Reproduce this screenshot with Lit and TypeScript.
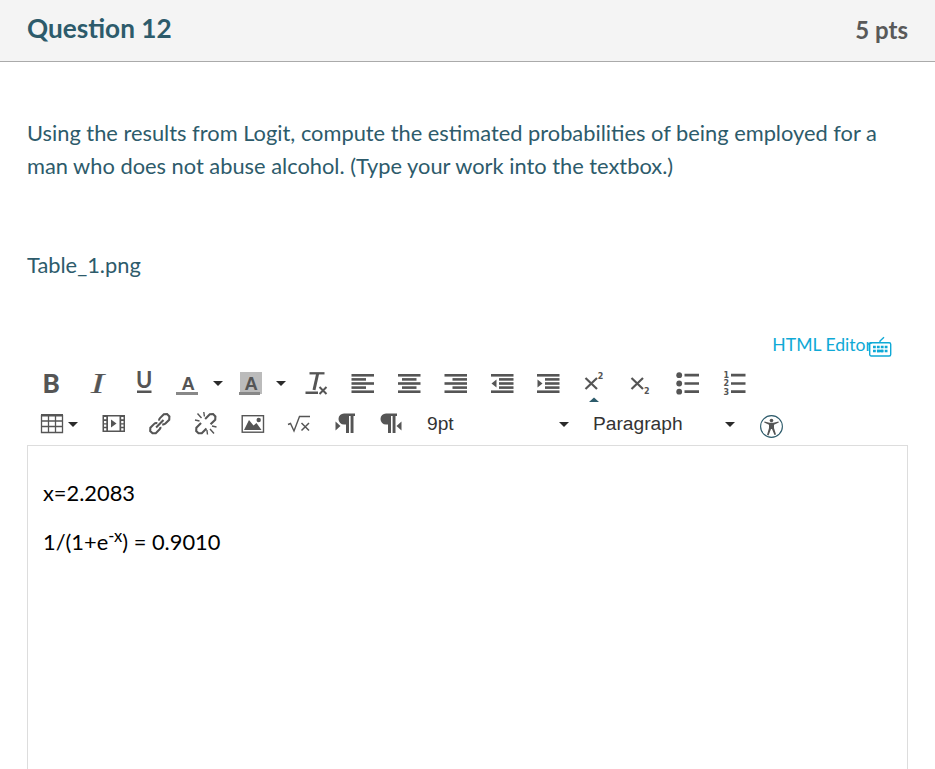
import { LitElement, html, css, svg } from "lit";
import { customElement } from "lit/decorators.js";

const bars = (rows: number[][]) =>
  rows.map(([x, w], i) => svg`<rect x=${x} y=${2 + i * 4.1} width=${w} height="2.6"/>`);

const link = svg`<g transform="translate(-.2 -.3) rotate(-45 12 12) translate(12 12) scale(1.16) translate(-12 -12)" fill="none" stroke="currentColor" stroke-width="1.8">
  <path d="M10.500 14.300Q9.800 15.300 8.500 15.300H3.800L1.700 13.400V10.600L3.800 8.700H8.500Q10 8.700 10.800 10.200"/>
  <path d="M13.500 9.700Q14.200 8.700 15.500 8.700H20.200L22.300 10.600V13.400L20.200 15.300H15.500Q14 15.300 13.200 13.800"/><path d="M7.500 12h9"/></g>`;

const unlink = svg`<g transform="translate(-.2 -.3) rotate(-45 12 12) translate(12 12) scale(1.16) translate(-12 -12)" fill="none" stroke="currentColor" stroke-width="1.800">
  <path d="M9.500 15.300H3.800L1.700 13.400V10.600L3.800 8.700H9.500"/><path d="M14.500 8.700H20.200L22.300 10.600V13.400L20.200 15.300H14.500"/></g>
  <path d="M1 8l4.500 1M3.500 1.500l4 4.500M9.800 0l.6 4.500M22.500 15l-4.500-1M20 21.500l-4-4.500M13.500 22.500l-.6-4.500" fill="none" stroke="currentColor" stroke-width="1.400"/>`;

const pilcrow = (dx: number) =>
  svg`<path transform=${`translate(${dx} 0)`} d="M6 1.500H17V4H15.500V21H12.600V4H11V21H8V12.500H6A5.500 5.500 0 0 1 6 1.500Z"/>`;

const top = [
  ["Bold", svg`<text x="2.600" y="21" class="b">B</text>`],
  ["Italic", svg`<text transform="translate(4.800 21) scale(1.400 1)" class="i">I</text>`],
  ["Underline", svg`<text x="4" y="16" class="u">U</text><rect x="5" y="18.500" width="14.500" height="2.500"/>`],
  ["Text color", svg`<text x="5.500" y="18" class="a">A</text><rect x="0" y="20" width="22" height="3" fill="#888"/>`, true],
  ["Background color", svg`<rect x="1" y="0" width="22" height="22" fill="#bbb"/><rect x="0" y="20" width="21" height="3" fill="#888"/><text x="5.500" y="18" class="a">A</text>`, true],
  ["Clear formatting", svg`<path d="M5.500 1.300H20.500" fill="none" stroke="currentColor" stroke-width="2.300"/><path d="M13.700 1.500L10 18" fill="none" stroke="currentColor" stroke-width="3"/><rect x="1.500" y="19.500" width="12.500" height="2.500"/><path d="M15.500 15l7 7M22.500 15l-7 7" stroke="currentColor" stroke-width="2"/>`],
  ["Align left", bars([[0.5, 22.5], [0.5, 14.5], [0.5, 22.5], [0.5, 14.5], [0.5, 22.5]])],
  ["Align center", bars([[1, 22.5], [5, 14.5], [1, 22.5], [5, 14.5], [1, 22.5]])],
  ["Align right", bars([[0.5, 22.5], [8.5, 14.5], [0.5, 22.5], [8.5, 14.5], [0.5, 22.5]])],
  ["Outdent", svg`${bars([[1, 22.5], [9, 14.5], [9, 14.5], [9, 14.5], [1, 22.5]])}<path d="M6.500 7.500v8L1.500 11.500z"/>`],
  ["Indent", svg`${bars([[0, 22.5], [8, 14.5], [8, 14.5], [8, 14.5], [0, 22.5]])}<path d="M.5 7.500v8l5-4z"/>`],
  ["Superscript", svg`<path d="M2.500 6L14 17M14 6L2.500 17" stroke="currentColor" stroke-width="2.200"/><text x="14.800" y="7" class="n">2</text><path d="M6 30h10l-5-4.500z" fill="#2d5b6b"/>`],
  ["Subscript", svg`<path d="M2.500 6L14 17M14 6L2.500 17" stroke="currentColor" stroke-width="2.200"/><text x="15" y="22" class="n">2</text>`],
  ["Bullet list", svg`<circle cx="3.200" cy="3.200" r="2.900"/><circle cx="3.200" cy="11.500" r="2.900"/><circle cx="3.200" cy="19.700" r="2.900"/><path d="M8.500 3.200h14.500M8.500 11.500h14.500M8.500 19.700h14.500" stroke="currentColor" stroke-width="2.700"/>`],
  ["Numbered list", svg`<text x="0.500" y="6" class="n">1</text><text x="0.500" y="14.300" class="n">2</text><text x="0.500" y="22.500" class="n">3</text><path d="M8 3.200h14.500M8 11.500h14.500M8 19.700h14.500" stroke="currentColor" stroke-width="2.700"/>`],
] as [string, unknown, boolean?][];

const bottom = [
  ["Table", svg`<path d="M1.500 3v17.500h21V3M8.500 3v17.500M15.500 3v17.500M1 9h22M1 14.500h22" fill="none" stroke="currentColor" stroke-width="1.300"/><rect x="1" y="2" width="22" height="2.500"/>`, true],
  ["Media", svg`<path fill-rule="evenodd" d="M.5 3h22.500v17H.5zM6 4.500v14h11.500v-14zM2 5v2.300h2.300V5zM2 9v2.300h2.300V9zM2 12.500v2.300h2.300v-2.300zM2 16.300v2.300h2.300v-2.300zM19.200 5v2.300h2.300V5zM19.200 9v2.300h2.300V9zM19.200 12.500v2.300h2.300v-2.300zM19.200 16.300v2.300h2.300v-2.300z"/><path d="M9 7.500v8l5.500-4z"/>`],
  ["Link", link],
  ["Unlink", unlink],
  ["Image", svg`<rect x="1.200" y="3.700" width="21.300" height="16.500" fill="none" stroke="currentColor" stroke-width="1.400"/><path d="M3 18l5-10 4.500 5.500 3-2.500 5 7z"/><circle cx="17.700" cy="8" r="2.200"/>`],
  ["Equation", svg`<path d="M1 12.500l2.500-1 3.500 7.500L12.500 4.500H23" fill="none" stroke="currentColor" stroke-width="1.400"/><path d="M14.500 11l7.500 7.500M22 11l-7.500 7.500" stroke="currentColor" stroke-width="1.500"/>`],
  ["Left to right", svg`${pilcrow(4)}<path d="M1.500 9.500v9l5-4.500z"/>`],
  ["Right to left", svg`${pilcrow(0)}<path d="M21.500 9.500v9l-5-4.500z"/>`],
] as [string, unknown, boolean?][];

@customElement("app-root")
export class AppRoot extends LitElement {
  static styles = css`
    :host { display: flex; flex-direction: column; height: 769px; overflow: hidden; background: #fff; font-family: Lato, sans-serif; color: #2d5b6b; }
    .head { box-sizing: border-box; height: 62px; flex: none; display: flex; justify-content: space-between; padding: 0 27px; background: #f4f4f4; border-bottom: 1px solid #aaa; font-weight: 700; font-size: 26.2px; line-height: 57px; }
    .pts { color: #595959; font-size: 24px; line-height: 60px; }
    .body { flex: 1; display: flex; flex-direction: column; padding: 54px 27px 0; font-size: 21.83px; line-height: 33px; }
    p { margin: 0; white-space: nowrap; }
    .file { margin-top: 66px; }
    .switch { display: flex; justify-content: flex-end; margin-top: 51px; padding-right: 15px; height: 26px; color: #0fa9d6; font-size: 17.6px; line-height: 26px; }
    .keys { width: 24px; height: 26px; margin-left: -3px; }
    .row { display: grid; height: 24px; margin-left: 13px; color: #555; line-height: 24px; }
    .top { margin-top: 14px; grid-template-columns: 46px 46px 44px 63px 65px 47px 46px 47px 46px 47px 46px 46px 47px 47px 24px; }
    .bottom { margin-top: 16px; grid-template-columns: 62px 46px 46px 47px 46px 47px 46px 47px 166px 167px 30px; }
    .tool { display: flex; align-items: center; }
    svg { display: block; flex: none; overflow: visible; fill: currentColor; }
    .caret { width: 0; border: 5px solid transparent; border-top-color: #2b2b2b; border-bottom: 0; }
    .top .caret { margin-left: 13.4px; margin-bottom: 2px; }
    .bottom .caret { margin-left: 4px; }
    .select { display: flex; justify-content: space-between; align-items: center; color: #333; font: 19.2px/24px "Liberation Sans", sans-serif; }
    .size { padding-right: 24px; }
    .para { padding-right: 25px; }
    .b { font: 900 26px Lato, sans-serif; }
    .i { font: italic 400 29px "Liberation Serif", serif; stroke: currentColor; stroke-width: 0.2px; }
    .u { font: 700 22px Lato, sans-serif; }
    .a { font: 700 18.5px "Liberation Sans", sans-serif; }
    .n { font: 700 8px "DejaVu Sans", sans-serif; }
    .editor { flex: 1; margin-top: 9px; border: 1px solid #ddd; border-bottom: 0; padding: 30px 15px 0; color: #000; }
    .editor p + p { margin-top: 16px; }
    sup { font-size: 16.5px; line-height: 0; position: relative; top: -0.5em; vertical-align: baseline; }
  `;

  tool([name, art, menu]: [string, unknown, boolean?]) {
    return html`<div class="tool" role="button" aria-label=${name}>
      <svg width="24" height="24" viewBox="0 0 24 24">${art}</svg>
      ${menu ? html`<span class="caret"></span>` : null}
    </div>`;
  }

  render() {
    return html`
      <div class="head"><span>Question 12</span><span class="pts">5 pts</span></div>
      <div class="body">
        <p>Using the results from Logit, compute the estimated probabilities of being employed for a<br />man who does not abuse alcohol. (Type your work into the textbox.)</p>
        <p class="file">Table_1.png</p>
        <div class="switch"><span>HTML Editor</span>
          <svg class="keys" viewBox="0 0 24 26"><rect x="0.700" y="10.700" width="21" height="13.300" rx="1.500" fill="none" stroke="currentColor" stroke-width="1.400"/><path d="M11 10.500V9L15 5.200" fill="none" stroke="currentColor" stroke-width="1.400"/><path d="M4 15h14.500M4 19h14.500" stroke="currentColor" stroke-width="2.500" stroke-dasharray="2.800 1.100"/><path d="M8 19h6" stroke="currentColor" stroke-width="2.500"/></svg>
        </div>
        <div class="row top">${top.map((t) => this.tool(t))}</div>
        <div class="row bottom">
          ${bottom.map((t) => this.tool(t))}
          <div class="select size">9pt<span class="caret"></span></div>
          <div class="select para">Paragraph<span class="caret"></span></div>
          <svg width="24" height="24" viewBox="0 0 24 24"><circle cx="11.500" cy="14.500" r="10.900" fill="none" stroke="#2d5b6b" stroke-width="1.100"/><circle cx="11.500" cy="8.500" r="1.800"/><path d="M4.500 9.500l5 1.300h4l5-1.300.3 1-4.800 2.200v3.300l2 6.500-1.500.5L12 17h-1l-2.500 6.500-1.500-.5L9 16v-3.300L4.200 10.500z"/></svg>
        </div>
        <div class="editor"><p>x=2.2083</p><p>1/(1+e<sup>-x</sup>) = 0.9010</p></div>
      </div>`;
  }
}
